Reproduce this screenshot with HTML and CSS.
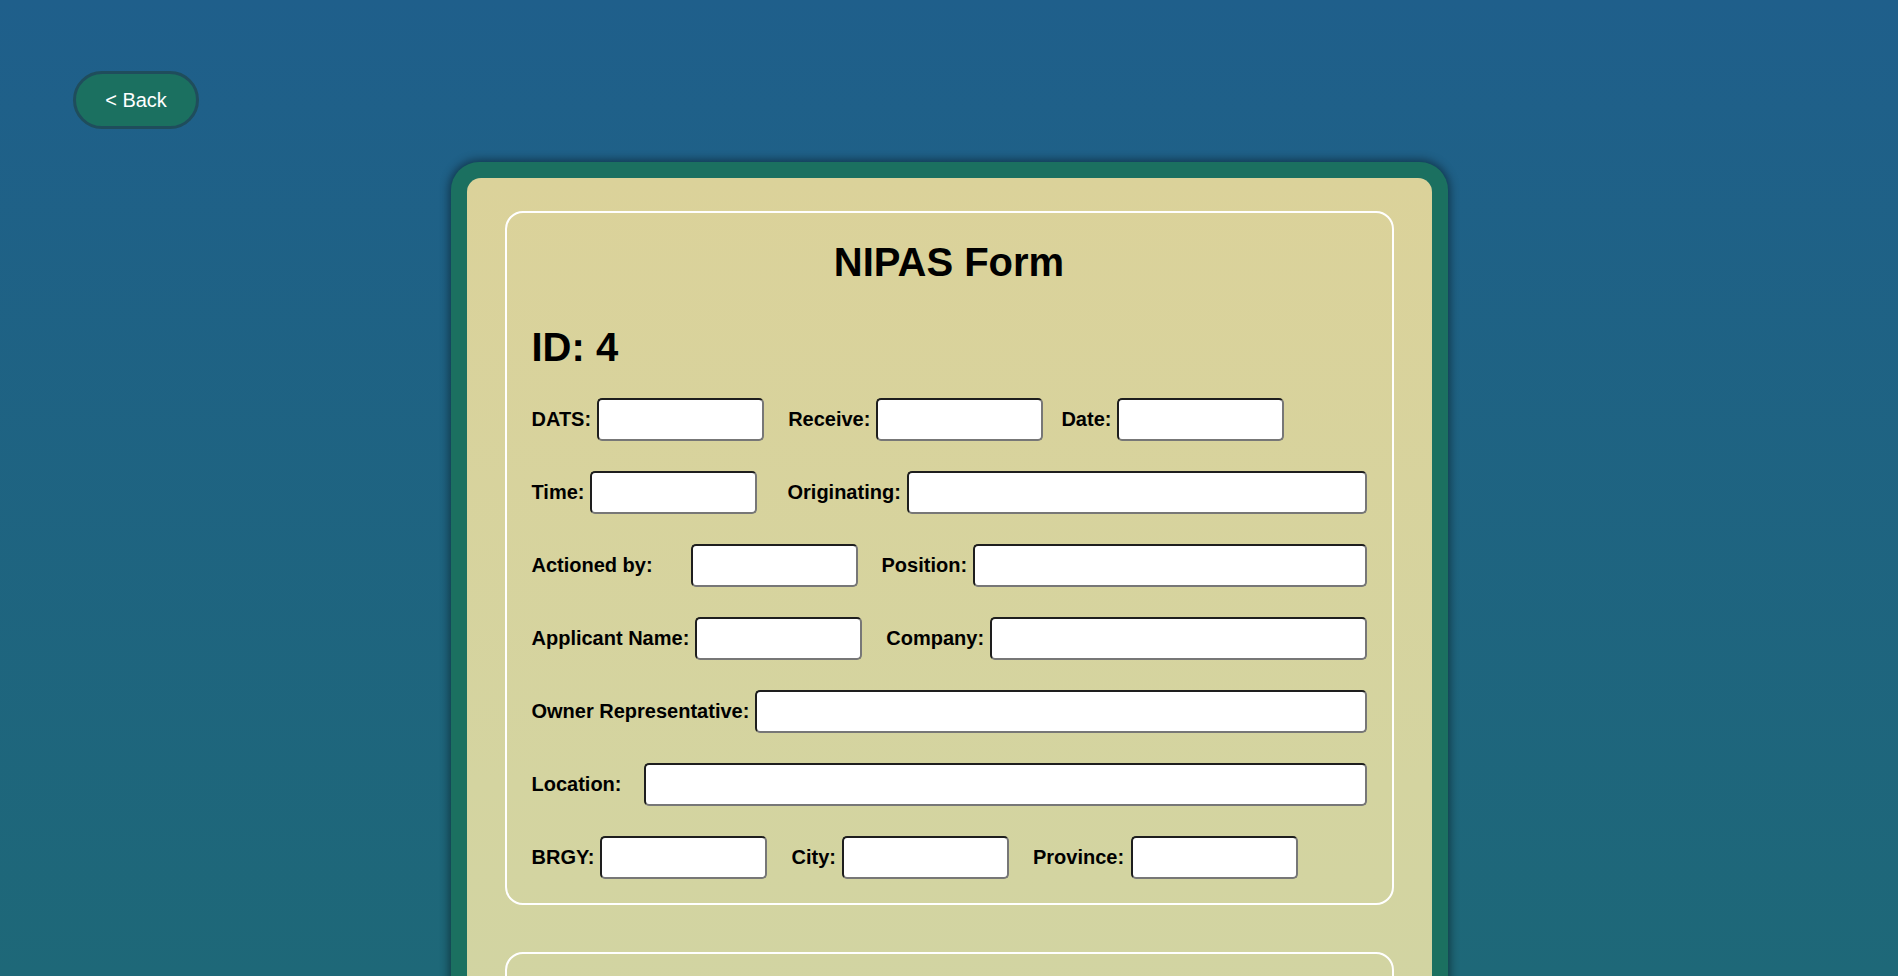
FILE: index.html
```html
<!DOCTYPE html>
<html lang="en">
<head>
<meta charset="utf-8">
<title>NIPAS Form</title>
<link rel="stylesheet" href="styles.css">
</head>
<body>
<div class="page">
  <button class="back-btn" type="button">&lt; Back</button>
  <div class="card">
    <div class="card-inner">
      <section class="section">
        <h1 class="title">NIPAS Form</h1>
        <h1 class="record-id">ID: 4</h1>

        <div class="row">
          <div class="field"><label>DATS:</label><input class="inp" type="text"></div>
          <div class="field f-gap"><label>Receive:</label><input class="inp" type="text"></div>
          <div class="field f-gap-s"><label>Date:</label><input class="inp" type="text"></div>
        </div>

        <div class="row">
          <div class="field"><label>Time:</label><input class="inp" type="text"></div>
          <div class="field grow f-gap-l"><label>Originating:</label><input class="inp fill" type="text"></div>
        </div>

        <div class="row">
          <div class="field"><label class="lbl-actioned">Actioned by:</label><input class="inp" type="text"></div>
          <div class="field grow f-gap"><label>Position:</label><input class="inp fill" type="text"></div>
        </div>

        <div class="row">
          <div class="field"><label>Applicant Name:</label><input class="inp" type="text"></div>
          <div class="field grow f-gap"><label>Company:</label><input class="inp fill" type="text"></div>
        </div>

        <div class="row">
          <div class="field grow"><label>Owner Representative:</label><input class="inp fill" type="text"></div>
        </div>

        <div class="row">
          <div class="field grow"><label class="lbl-location">Location:</label><input class="inp fill" type="text"></div>
        </div>

        <div class="row">
          <div class="field"><label>BRGY:</label><input class="inp" type="text"></div>
          <div class="field f-gap"><label>City:</label><input class="inp" type="text"></div>
          <div class="field f-gap f-wide"><label>Province:</label><input class="inp" type="text"></div>
        </div>
      </section>

      <section class="section section-next"></section>
    </div>
  </div>
</div>
</body>
</html>
```

FILE: styles.css
```css
* { box-sizing: border-box; }

html, body {
  margin: 0;
  padding: 0;
}

body {
  font-family: "Liberation Sans", Arial, sans-serif;
  background: linear-gradient(180deg, #1f5f8b 0%, #1e6878 100%);
  background-attachment: fixed;
  min-height: 100vh;
  color: #000;
}

.page {
  padding: 71px 0 40px;
}

.back-btn {
  display: block;
  margin-left: 73px;
  width: 126px;
  height: 58px;
  border: 3px solid #1f4d5c;
  border-radius: 29px;
  background: #1b7060;
  color: #fff;
  font-family: "Liberation Sans", Arial, sans-serif;
  font-size: 20px;
  padding: 0;
  cursor: pointer;
}

.card {
  width: 997px;
  margin: 33px auto 0;
  background: #1b7060;
  border-radius: 28px;
  padding: 16px;
  box-shadow: 0 0 10px 2px rgba(0, 0, 0, 0.45);
}

.card-inner {
  background: linear-gradient(180deg, #dbd29a 0%, #d4d4a0 50%, #cdd4a6 100%);
  border-radius: 14px;
  padding: 33px 38px 40px;
}

.section {
  border: 2px solid #fff;
  border-radius: 18px;
  padding: 26px 25px 24px;
}

.section-next {
  margin-top: 47px;
  min-height: 400px;
}

.title {
  margin: 0;
  font-size: 40px;
  line-height: 46px;
  font-weight: bold;
  text-align: center;
}

.record-id {
  margin: 39px 0 0;
  font-size: 40px;
  line-height: 46px;
  font-weight: bold;
}

.row {
  display: flex;
  align-items: center;
  margin-top: 30px;
}

.record-id + .row {
  margin-top: 28px;
}

.field {
  display: flex;
  align-items: center;
  gap: 6px;
}

.field label {
  font-size: 20px;
  font-weight: bold;
  white-space: nowrap;
}

.grow { flex: 1; }

.f-gap { margin-left: 24px; }
.f-gap-s { margin-left: 18px; }
.f-gap-l { margin-left: 30px; }
.f-wide { gap: 7px; }

.lbl-actioned { width: 153px; }
.lbl-location { width: 106px; }

.inp {
  width: 167px;
  height: 43px;
  background: #fff;
  border-style: solid;
  border-width: 2px;
  border-color: #1e1e1e #777 #777 #1e1e1e;
  border-radius: 5px;
  padding: 0 6px;
  font-size: 16px;
  font-family: "Liberation Sans", Arial, sans-serif;
}

.inp.fill {
  flex: 1;
  width: auto;
  min-width: 0;
}
```
